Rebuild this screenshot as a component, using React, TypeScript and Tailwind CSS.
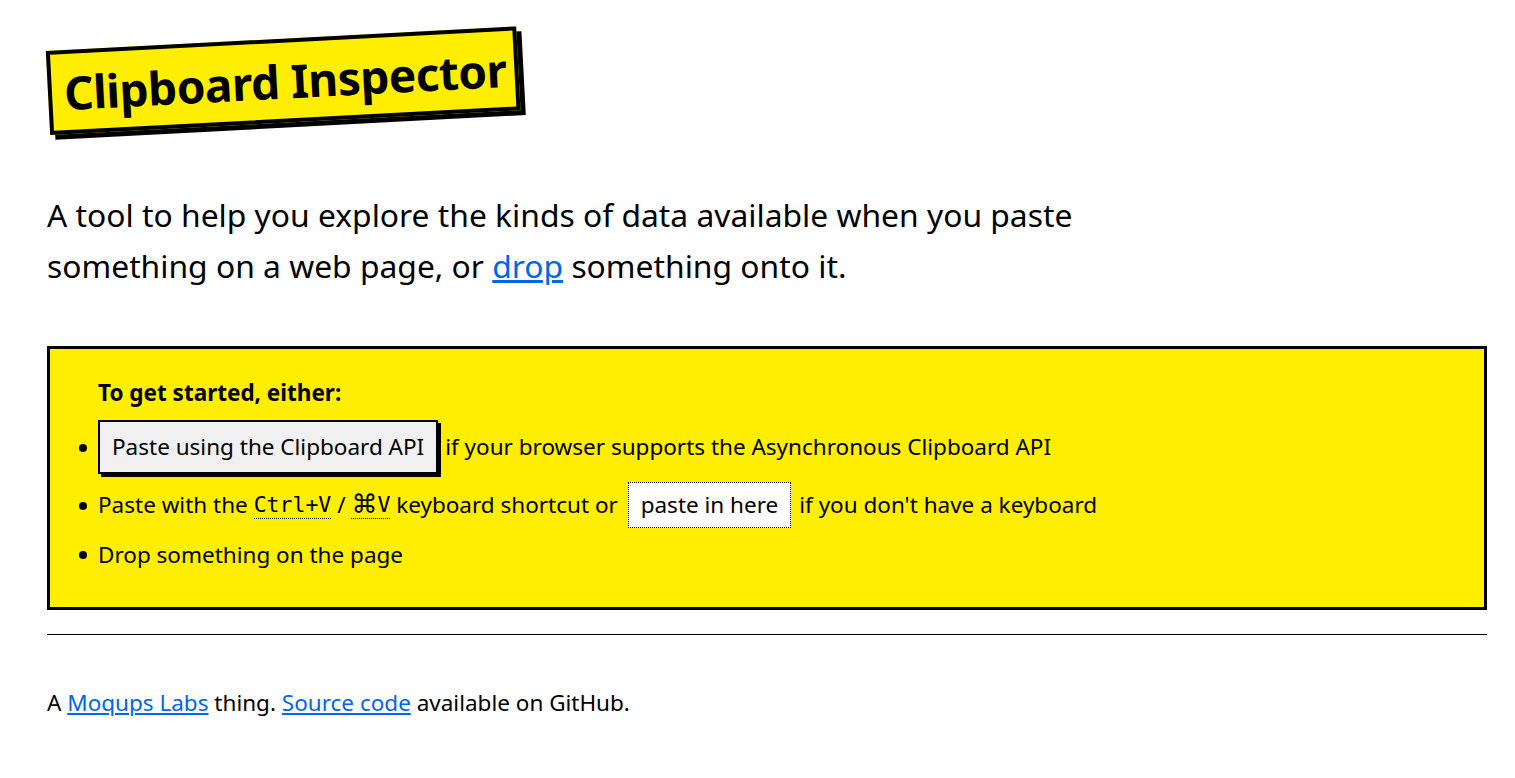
import React from "react";

export default function App() {
  const font = { fontFamily: '"Noto Sans", "Open Sans", sans-serif' };
  const mono = { fontFamily: '"DejaVu Sans Mono", monospace' };
  return (
    <div className="min-h-screen bg-white text-black" style={font}>
      <div className="pl-[47px] pr-[28px] pt-[37px]">
        <div className="pt-[8px] pb-[6px]">
          <h1 className="inline-block -rotate-[3deg] origin-left bg-[#ffee00] border-[4px] border-black shadow-[5px_5px_0_#000] pl-[12px] pr-[8px] py-[6px] text-[46px] font-bold leading-[64px] tracking-[-0.5px] ml-[1px] mt-[6px]">
            Clipboard Inspector
          </h1>
        </div>
        <p className="mt-[48px] max-w-[1100px] text-[31.8px] leading-[51px]">
          A tool to help you explore the kinds of data available when you paste something on a web page, or{" "}
          <a href="#" className="text-[#0066ee] underline">drop</a> something onto it.
        </p>
        <div className="mt-[55px] border-[3px] border-black bg-[#ffee00] pl-[48px] pt-[29px] pb-[37px] text-[22.5px]">
          <p className="font-bold leading-[30px] mb-[12px]">To get started, either:</p>
          <ul className="leading-[30px]">
            <li className="flex items-center relative">
              <span className="absolute -left-[19px] top-[24px] w-[8px] h-[8px] rounded-full bg-black" />
              <button className="bg-[#f0f0f0] border-2 border-black shadow-[3px_3px_0_#000] px-[12px] py-[10px] leading-[30px] mr-[7px]">
                Paste using the Clipboard API
              </button>
              <span>if your browser supports the Asynchronous Clipboard API</span>
            </li>
            <li className="flex items-center relative mt-[8px]">
              <span className="absolute -left-[19px] top-[20px] w-[8px] h-[8px] rounded-full bg-black" />
              <span>Paste with the&nbsp;</span>
              <kbd className="border-b border-dotted border-black text-[21.5px] leading-[27px]" style={mono}>Ctrl+V</kbd>
              <span>&nbsp;/&nbsp;</span>
              <kbd className="border-b border-dotted border-black text-[21.5px] leading-[27px] flex items-end" style={mono}>
                <span className="text-[26px] leading-[27px]" style={{ fontFamily: '"DejaVu Sans", sans-serif' }}>⌘</span>V
              </kbd>
              <span>&nbsp;keyboard shortcut or&nbsp;</span>
              <span className="ml-[4px] mr-[8px] bg-white border border-dotted border-black px-[12px] py-[7px]">paste in here</span>
              <span>if you don't have a keyboard</span>
            </li>
            <li className="flex items-center relative mt-[12px]">
              <span className="absolute -left-[19px] top-[11px] w-[8px] h-[8px] rounded-full bg-black" />
              <span>Drop something on the page</span>
            </li>
          </ul>
        </div>
        <hr className="mt-[24px] border-t border-black" />
        <p className="mt-[53px] text-[22.5px] leading-[30px]">
          A <a href="#" className="text-[#0066ee] underline">Moqups Labs</a> thing.{" "}
          <a href="#" className="text-[#0066ee] underline">Source code</a> available on GitHub.
        </p>
      </div>
    </div>
  );
}
